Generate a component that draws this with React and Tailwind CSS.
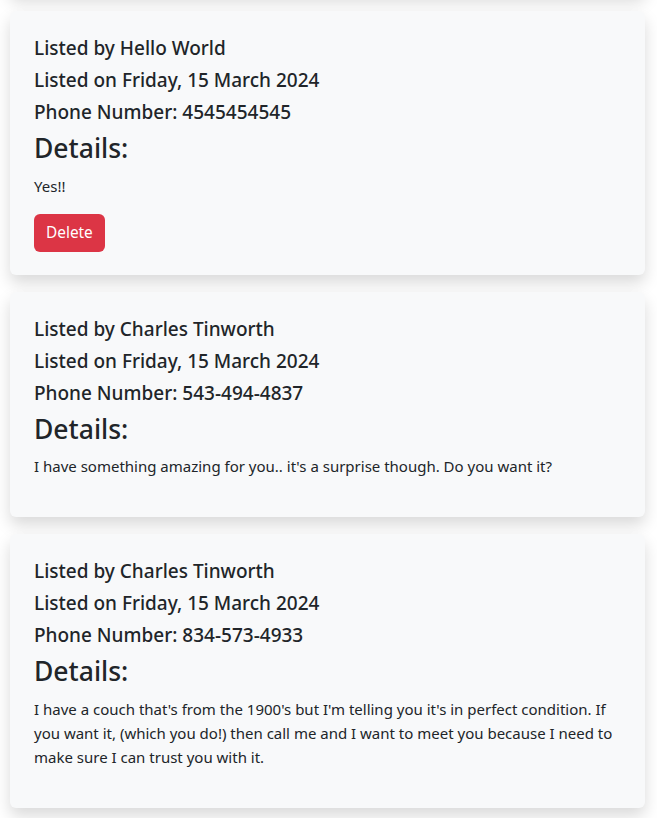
import React from "react";

const listings = [
  {
    by: "Hello World",
    on: "Friday, 15 March 2024",
    phone: "4545454545",
    details: "Yes!!",
    del: true,
  },
  {
    by: "Charles Tinworth",
    on: "Friday, 15 March 2024",
    phone: "543-494-4837",
    details:
      "I have something amazing for you.. it's a surprise though. Do you want it?",
  },
  {
    by: "Charles Tinworth",
    on: "Friday, 15 March 2024",
    phone: "834-573-4933",
    details:
      "I have a couch that's from the 1900's but I'm telling you it's in perfect condition. If you want it, (which you do!) then call me and I want to meet you because I need to make sure I can trust you with it.",
  },
];

function Card({ l }) {
  return (
    <div className="mb-[17px] rounded-[6px] bg-[#f8f9fa] px-6 pt-[25px] pb-[23px] shadow-[0_8px_16px_rgba(0,0,0,0.15)]">
      <h5 className="mb-2 text-[19px] font-medium leading-[24px]">Listed by {l.by}</h5>
      <h5 className="mb-2 text-[19px] font-medium leading-[24px]">Listed on {l.on}</h5>
      <h5 className="mb-2 text-[19px] font-medium leading-[24px]">Phone Number: {l.phone}</h5>
      <h3 className="mb-2 text-[26.5px] font-medium leading-[33.6px]">Details:</h3>
      <p className="mb-4 text-[15px] leading-[24px]">{l.details}</p>
      {l.del && (
        <button className="h-[38px] rounded-[6px] bg-[#dc3545] px-3 text-[15.4px] leading-[24px] text-white">
          Delete
        </button>
      )}
    </div>
  );
}

export default function App() {
  return (
    <div
      className="h-[818px] overflow-hidden bg-white text-[#212529]"
      style={{ fontFamily: '"Noto Sans", "Open Sans", sans-serif' }}
    >
      <div className="-mt-[40px] ml-[10px] w-[635px]">
        <div className="mb-[17px] h-[34px] rounded-[6px] bg-[#f8f9fa] shadow-[0_8px_16px_rgba(0,0,0,0.15)]" />
        {listings.map((l, i) => (
          <Card key={i} l={l} />
        ))}
      </div>
    </div>
  );
}
